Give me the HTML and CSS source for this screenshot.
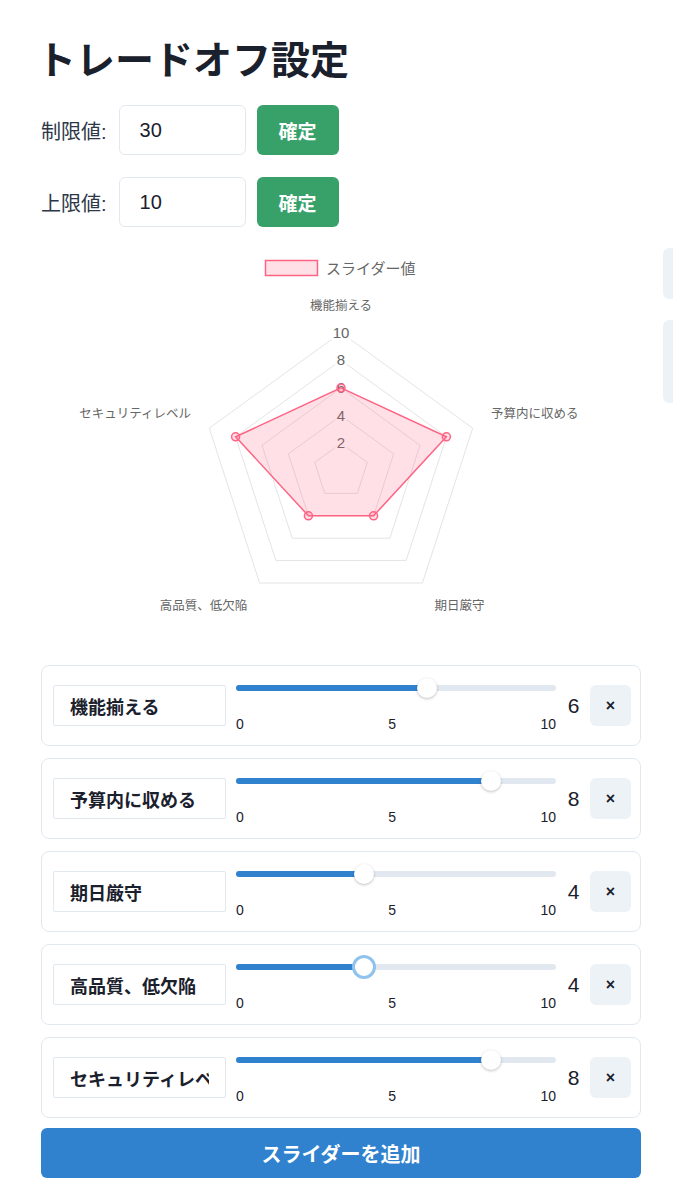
FILE: index.html
```html
<!DOCTYPE html>
<html lang="ja">
<head>
<meta charset="utf-8">
<title>トレードオフ設定</title>
<link rel="stylesheet" href="styles.css">
</head>
<body>
<div class="page">
  <h1 class="title">トレードオフ設定</h1>

  <div class="limit-row">
    <label class="limit-label">制限値:</label>
    <input class="limit-input" type="text" value="30">
    <button class="confirm">確定</button>
  </div>
  <div class="limit-row">
    <label class="limit-label">上限値:</label>
    <input class="limit-input" type="text" value="10">
    <button class="confirm">確定</button>
  </div>

  <div class="chart-row">
    <svg class="chart" width="600" height="380" viewBox="0 0 600 380" xmlns="http://www.w3.org/2000/svg">
      <g class="grid" fill="none" stroke="#e4e4e4" stroke-width="1">
        <polygon points="300,82.5 431.7,178.2 381.4,333 218.6,333 168.3,178.2"/>
        <polygon points="300,110.2 405.4,186.8 365.1,310.6 234.9,310.6 194.6,186.8"/>
        <polygon points="300,137.9 379,195.3 348.8,288.2 251.2,288.2 221,195.3"/>
        <polygon points="300,165.6 352.7,203.9 332.6,265.8 267.4,265.8 247.3,203.9"/>
        <polygon points="300,193.3 326.3,212.4 316.3,243.4 283.7,243.4 273.7,212.4"/>
      </g>
      <g class="ticks">
        <rect x="290" y="74" width="20" height="17" fill="#fff" fill-opacity="0.75"/>
        <rect x="294" y="101.7" width="12" height="17" fill="#fff" fill-opacity="0.75"/>
        <rect x="294" y="129.4" width="12" height="17" fill="#fff" fill-opacity="0.75"/>
        <rect x="294" y="157.1" width="12" height="17" fill="#fff" fill-opacity="0.75"/>
        <rect x="294" y="184.8" width="12" height="17" fill="#fff" fill-opacity="0.75"/>
        <text x="300" y="82" class="tick-text">10</text>
        <text x="300" y="109.7" class="tick-text">8</text>
        <text x="300" y="137.4" class="tick-text">6</text>
        <text x="300" y="165.1" class="tick-text">4</text>
        <text x="300" y="192.8" class="tick-text">2</text>
      </g>
      <polygon points="300,137.9 405.4,186.8 332.6,265.8 267.4,265.8 194.6,186.8" fill="rgba(255,99,132,0.2)" stroke="rgb(255,99,132)" stroke-width="1.5"/>
      <g fill="rgba(255,99,132,0.2)" stroke="rgb(255,99,132)" stroke-width="1.5">
        <circle cx="300" cy="137.9" r="4"/>
        <circle cx="405.4" cy="186.8" r="4"/>
        <circle cx="332.6" cy="265.8" r="4"/>
        <circle cx="267.4" cy="265.8" r="4"/>
        <circle cx="194.6" cy="186.8" r="4"/>
      </g>
      <g class="point-labels">
        <text x="300" y="56" text-anchor="middle" class="point-text">機能揃える</text>
        <text x="450" y="164" text-anchor="start" class="point-text">予算内に収める</text>
        <text x="418.5" y="356" text-anchor="middle" class="point-text">期日厳守</text>
        <text x="162.5" y="356" text-anchor="middle" class="point-text">高品質、低欠陥</text>
        <text x="150" y="164" text-anchor="end" class="point-text">セキュリティレベル</text>
      </g>
      <rect x="224.5" y="10.5" width="52" height="15" fill="rgba(255,99,132,0.2)" stroke="rgb(255,99,132)" stroke-width="1.5"/>
      <text x="285" y="18.5" class="legend-text">スライダー値</text>
    </svg>
    <div class="side">
      <div class="side-box side-box-small"></div>
      <div class="side-box side-box-large"></div>
    </div>
  </div>

  <div class="cards">
    <div class="card">
      <input class="name-input" type="text" value="機能揃える">
      <div class="slider">
        <div class="track">
          <div class="track-fill" style="width: 191px"></div>
          <div class="thumb" style="left: 181px"></div>
        </div>
        <div class="slider-ticks"><span>0</span><span>5</span><span>10</span></div>
      </div>
      <span class="value">6</span>
      <button class="remove">×</button>
    </div>
    <div class="card">
      <input class="name-input" type="text" value="予算内に収める">
      <div class="slider">
        <div class="track">
          <div class="track-fill" style="width: 255px"></div>
          <div class="thumb" style="left: 245px"></div>
        </div>
        <div class="slider-ticks"><span>0</span><span>5</span><span>10</span></div>
      </div>
      <span class="value">8</span>
      <button class="remove">×</button>
    </div>
    <div class="card">
      <input class="name-input" type="text" value="期日厳守">
      <div class="slider">
        <div class="track">
          <div class="track-fill" style="width: 128px"></div>
          <div class="thumb" style="left: 118px"></div>
        </div>
        <div class="slider-ticks"><span>0</span><span>5</span><span>10</span></div>
      </div>
      <span class="value">4</span>
      <button class="remove">×</button>
    </div>
    <div class="card">
      <input class="name-input" type="text" value="高品質、低欠陥">
      <div class="slider">
        <div class="track">
          <div class="track-fill" style="width: 128px"></div>
          <div class="thumb thumb-focus" style="left: 118px"></div>
        </div>
        <div class="slider-ticks"><span>0</span><span>5</span><span>10</span></div>
      </div>
      <span class="value">4</span>
      <button class="remove">×</button>
    </div>
    <div class="card">
      <input class="name-input" type="text" value="セキュリティレベル">
      <div class="slider">
        <div class="track">
          <div class="track-fill" style="width: 255px"></div>
          <div class="thumb" style="left: 245px"></div>
        </div>
        <div class="slider-ticks"><span>0</span><span>5</span><span>10</span></div>
      </div>
      <span class="value">8</span>
      <button class="remove">×</button>
    </div>
  </div>

  <button class="add">スライダーを追加</button>
</div>
</body>
</html>
```

FILE: styles.css
```css
body {
  margin: 0;
  background: #ffffff;
  color: #1a202c;
  font-family: "Liberation Sans", "Noto Sans CJK JP", sans-serif;
}

.page {
  width: 600px;
  padding: 34px 0 0 41px;
}

.title {
  margin: 0 0 0 -4px;
  font-size: 39px;
  line-height: 46px;
  font-weight: 700;
  color: #1a202c;
  font-family: "Noto Sans CJK JP", sans-serif;
}

.limit-row {
  display: flex;
  align-items: center;
  height: 50px;
  margin-top: 25px;
}

.limit-row + .limit-row {
  margin-top: 22px;
}

.limit-label {
  font-size: 20px;
  color: #2d3748;
  margin-right: 12px;
}

.limit-input {
  box-sizing: border-box;
  width: 127px;
  height: 50px;
  border: 1px solid #e2e8f0;
  border-radius: 6px;
  padding: 0 20px;
  font: inherit;
  font-size: 20px;
  color: #1a202c;
  background: #fff;
  outline: none;
}

.confirm {
  box-sizing: border-box;
  margin-left: 11px;
  width: 82px;
  height: 50px;
  border: none;
  border-radius: 6px;
  background: #38a169;
  color: #fff;
  font: inherit;
  font-size: 19px;
  font-weight: 700;
}

.chart-row {
  display: flex;
  align-items: flex-start;
  margin-top: 21px;
  width: 632px;
}

.chart {
  display: block;
  flex-shrink: 0;
  margin-top: 2px;
  font-family: "Liberation Sans", "Noto Sans CJK JP", sans-serif;
}

.tick-text {
  font-size: 15px;
  fill: #666666;
  text-anchor: middle;
  dominant-baseline: central;
}

.point-text {
  font-size: 12.5px;
  fill: #666666;
  dominant-baseline: central;
}

.legend-text {
  font-size: 15px;
  fill: #666666;
  dominant-baseline: central;
}

.side {
  flex-shrink: 0;
  margin-left: 22px;
  width: 10px;
  display: flex;
  flex-direction: column;
  gap: 21px;
}

.side-box {
  background: #edf2f7;
  border-radius: 6px 0 0 6px;
}

.side-box-small {
  height: 51px;
}

.side-box-large {
  height: 83px;
}

.cards {
  margin-top: 35px;
  display: flex;
  flex-direction: column;
  gap: 12px;
}

.card {
  box-sizing: border-box;
  height: 81px;
  border: 1px solid #e2e8f0;
  border-radius: 8px;
  display: flex;
  align-items: center;
  padding: 0 9px 0 11px;
}

.name-input {
  box-sizing: border-box;
  width: 173px;
  height: 41px;
  border: 1px solid #e2e8f0;
  border-radius: 2px;
  padding: 0 16px;
  font: inherit;
  font-size: 18px;
  font-weight: 700;
  color: #1a202c;
  background: #fff;
  outline: none;
  flex-shrink: 0;
}

.slider {
  width: 320px;
  margin-left: 10px;
  flex-shrink: 0;
  display: flex;
  flex-direction: column;
}

.track {
  position: relative;
  height: 20px;
}

.track::before {
  content: "";
  position: absolute;
  left: 0;
  right: 0;
  top: 7px;
  height: 6px;
  border-radius: 3px;
  background: #e2e8f0;
}

.track-fill {
  position: absolute;
  left: 0;
  top: 7px;
  height: 6px;
  border-radius: 3px;
  background: #3182ce;
}

.thumb {
  position: absolute;
  top: 0;
  width: 20px;
  height: 20px;
  box-sizing: border-box;
  border-radius: 50%;
  background: #fff;
  box-shadow: 0 1px 3px rgba(0, 0, 0, 0.25);
}

.thumb-focus {
  top: -2px;
  margin-left: -2px;
  width: 24px;
  height: 24px;
  border: 3px solid #90c2ee;
  box-shadow: none;
}

.slider-ticks {
  display: flex;
  justify-content: space-between;
  margin-top: 18px;
  font-size: 14px;
  line-height: 17px;
  color: #1a202c;
}

.value {
  width: 13px;
  margin-left: 11px;
  font-size: 21px;
  color: #1a202c;
  text-align: center;
  flex-shrink: 0;
}

.remove {
  box-sizing: border-box;
  margin-left: 10px;
  width: 41px;
  height: 41px;
  border: none;
  border-radius: 6px;
  background: #edf2f7;
  color: #1a202c;
  font: inherit;
  font-size: 16px;
  font-weight: 700;
  flex-shrink: 0;
}

.add {
  display: block;
  box-sizing: border-box;
  margin-top: 10px;
  width: 600px;
  height: 50px;
  border: none;
  border-radius: 6px;
  background: #3182ce;
  color: #fff;
  font: inherit;
  font-size: 20px;
  font-weight: 700;
}
```
